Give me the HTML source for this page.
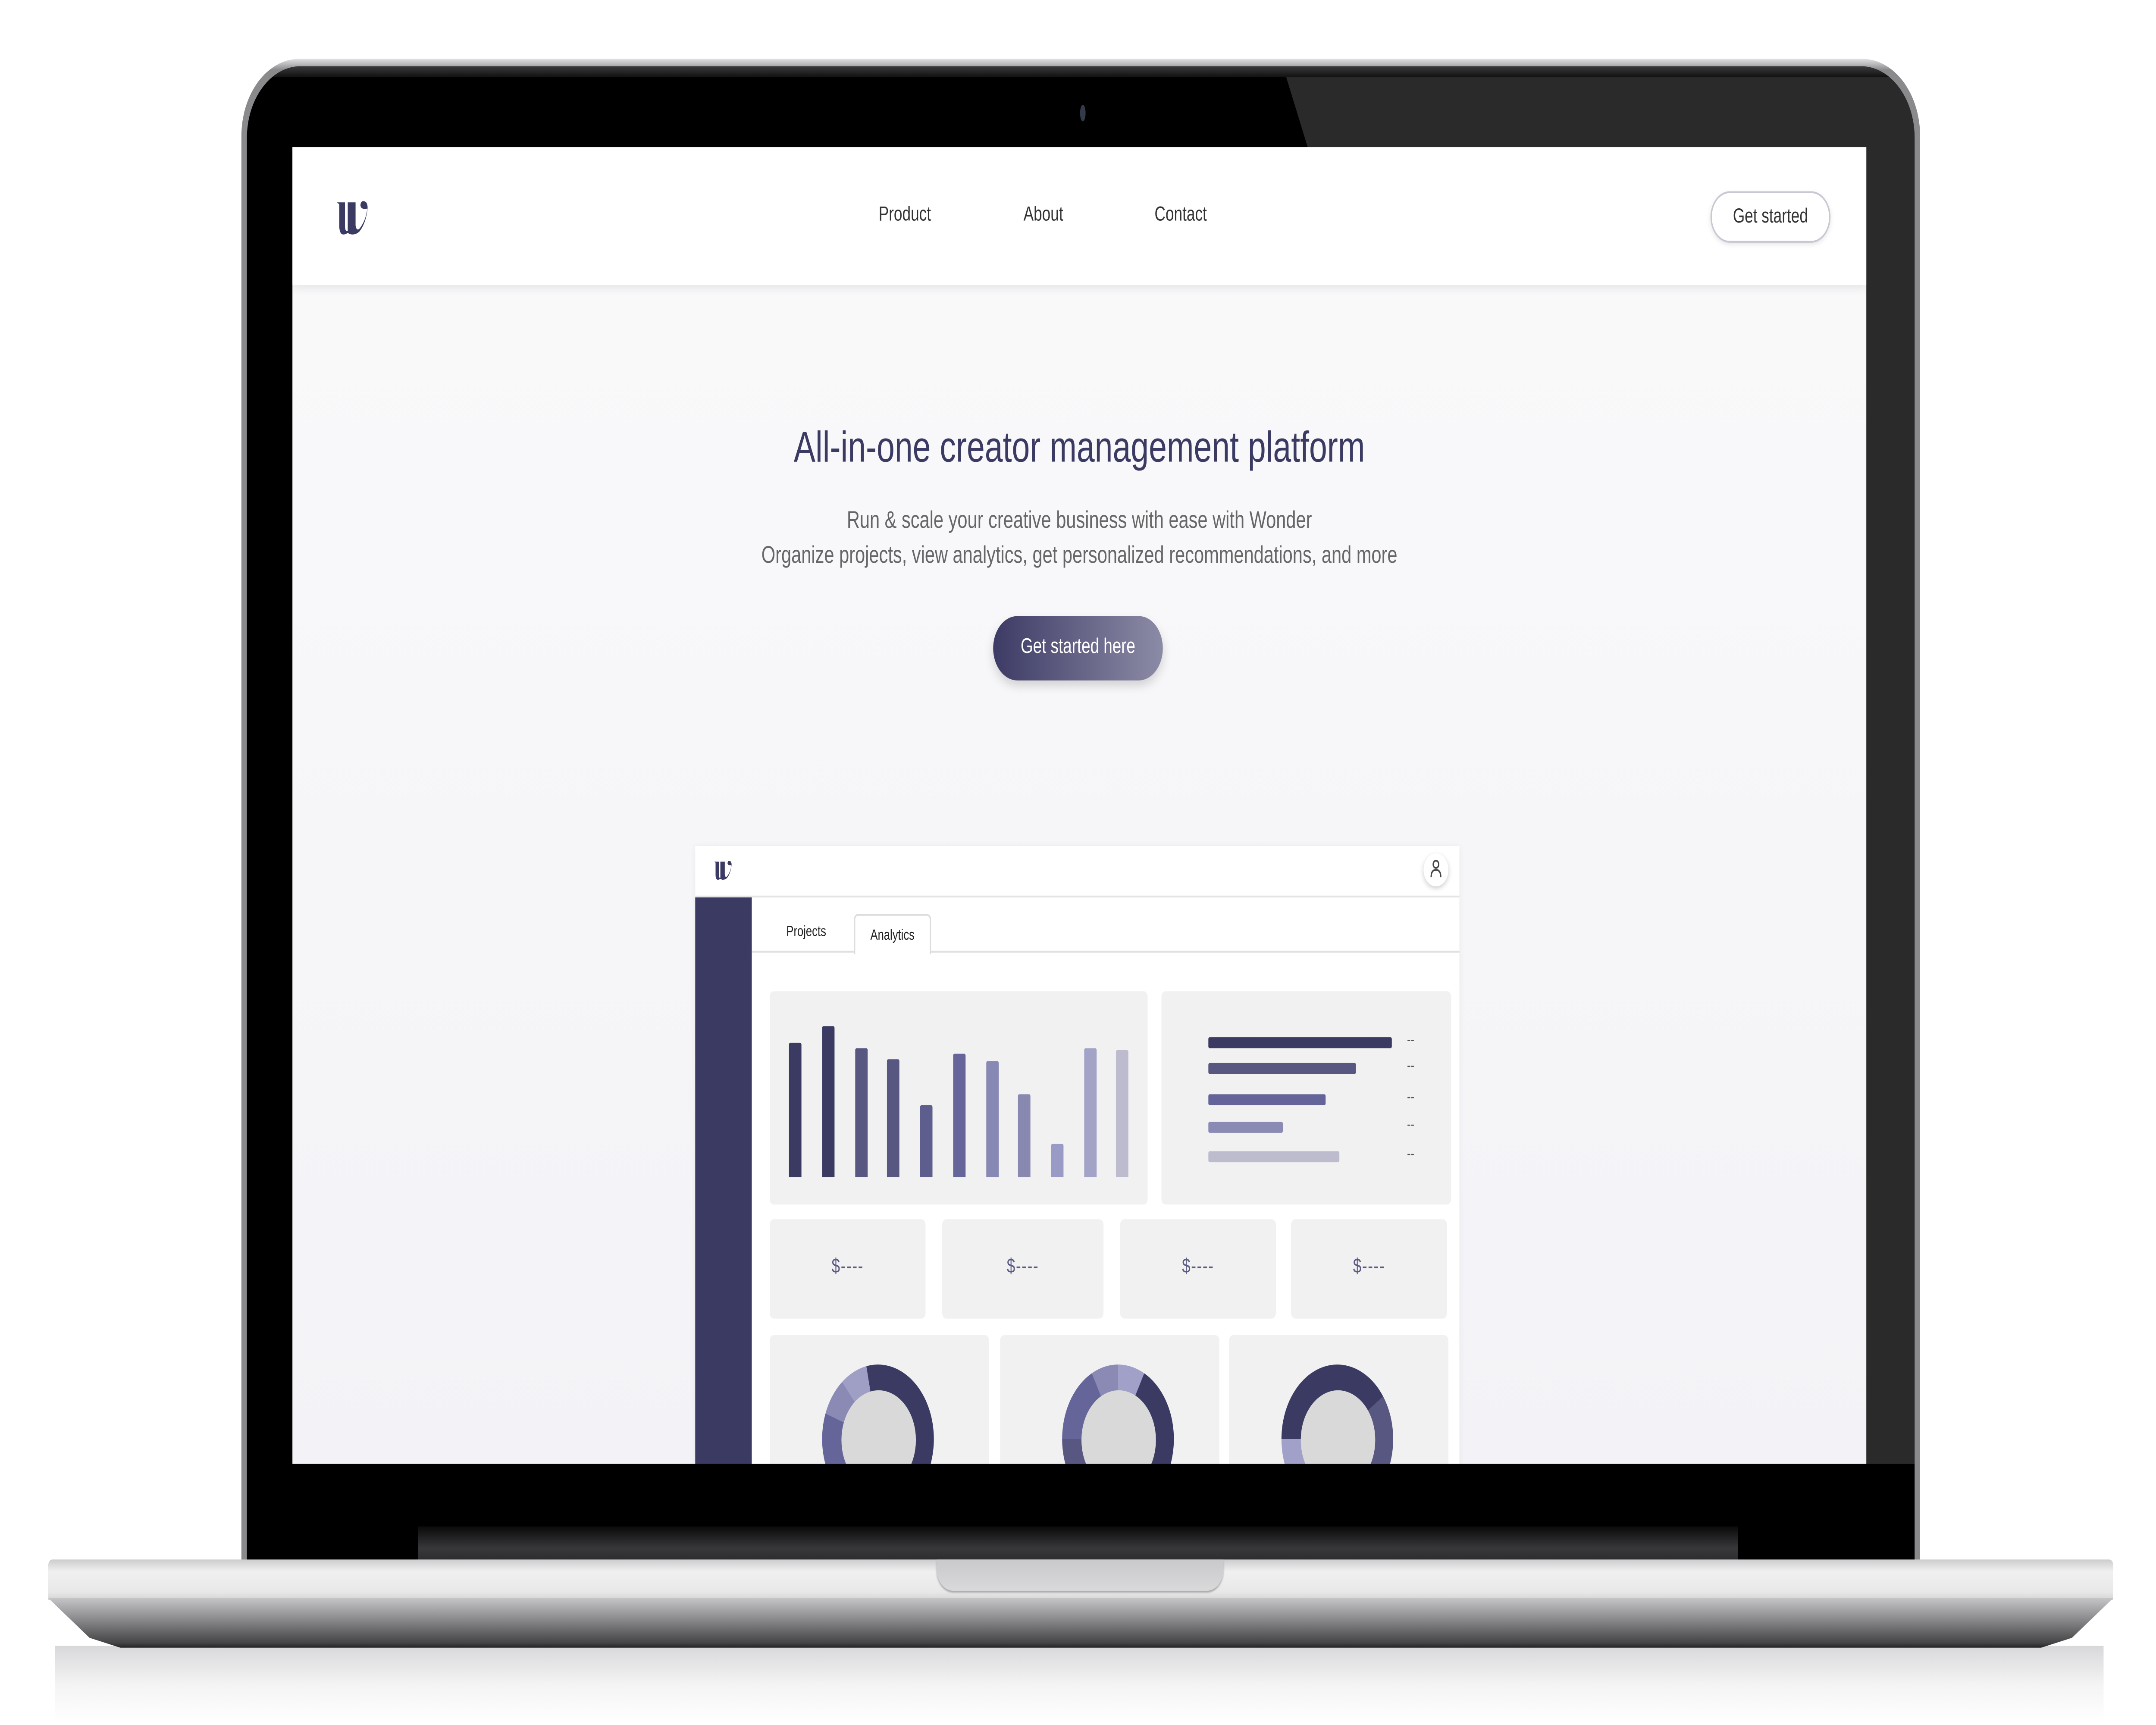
<!DOCTYPE html>
<html><head><meta charset="utf-8"><style>
html,body{margin:0;padding:0;background:#fff;width:100%;height:100%;overflow:hidden;}
body{position:relative;font-family:"Liberation Sans",sans-serif;}
#w{position:absolute;left:0;top:0;width:1563px;height:938px;transform-origin:0 0;transform:scale(4.2655);overflow:hidden;}
.a{position:absolute;}
.bar{position:absolute;bottom:0;width:9px;border-radius:1px 1px 0 0;}
.hb{position:absolute;left:34px;height:6px;border-radius:1px;}
.dd{position:absolute;left:178px;font-size:8px;color:#555;}
.card{position:absolute;background:#f1f1f1;border-radius:3px;}
.money{position:absolute;width:100%;top:20px;text-align:center;font-size:11px;color:#5a5a85;letter-spacing:0.5px;}
.donut{position:absolute;width:81px;height:81px;border-radius:50%;}
.donut i{position:absolute;left:13.5px;top:13.5px;width:54px;height:54px;border-radius:50%;background:#d9d9d9;}
</style></head><body><div id="w">
<div class="a" style="left:40px;top:895px;width:1485px;height:42px;background:linear-gradient(#d8d8da,#f4f4f5 50%,#fff);"></div>
<div class="a" style="left:175px;top:32px;width:1217px;height:830px;border-radius:42px 42px 0 0;background:linear-gradient(#e0e0e2,#b8b8bb 3px,#8a8a8d 6px);"></div>
<div class="a" style="left:179px;top:36px;width:1209px;height:826px;border-radius:39px 39px 0 0;background:#000;overflow:hidden;">
  <div class="a" style="left:0;top:0;width:1209px;height:826px;background:#2a2a2a;clip-path:polygon(751px 0,1209px 0,1209px 760px,1174px 760px,1174px 44px,769px 44px);"></div>
  <div class="a" style="left:0;top:0;width:1209px;height:6px;background:linear-gradient(#3a3a3c,#111);"></div>
</div>
<div class="a" style="left:783px;top:57px;width:4px;height:9px;border-radius:50%;background:#333a48;"></div>
<div class="a" style="left:303px;top:830px;width:957px;height:20px;background:linear-gradient(#0a0a0a,#38383b 60%,#2a2a2c);"></div>
<div class="a" style="left:35px;top:848px;width:1497px;height:22px;border-radius:3px 3px 0 0;background:linear-gradient(#ccccce,#f0f0f1 30%,#e8e8e9 80%,#d5d5d6);"></div>
<div class="a" style="left:35px;top:869px;width:1497px;height:27px;background:linear-gradient(#c5c5c7,#8e8e91 40%,#454548 90%,#222);clip-path:polygon(0 0,100% 0,98% 80%,96.5% 100%,3.5% 100%,2% 80%);"></div>
<div class="a" style="left:679px;top:848px;width:208px;height:17px;background:linear-gradient(#c9c9cb,#d9d9db);border-radius:0 0 12px 12px;box-shadow:0 1px 1px #aaa;"></div>
<div class="a" style="left:212px;top:80px;width:1141px;height:716px;overflow:hidden;background:linear-gradient(#fafafb,#f3f3f7);">
  <div class="a" style="left:0;top:0;width:1141px;height:75px;background:#fff;box-shadow:0 2px 5px rgba(0,0,0,0.08);"></div>
  <svg class="a" style="left:22px;top:18px" width="46" height="40" viewBox="0 0 300 240">
    <path d="M67 68 L105 68 L105 150 Q105 170 115 170 L118 170 L118 68 L155 68 L155 150 Q160 172 175 160 Q205 130 210 90 Q180 95 178 78 Q180 62 195 64 Q212 66 212 88 Q205 140 175 170 Q160 182 140 182 Q128 182 118 176 Q108 182 98 182 Q78 182 78 150 L78 75 Z" fill="#3a3a63"/>
  </svg>
  <div class="a" style="left:425px;top:31px;font-size:11px;color:#333;">Product</div>
  <div class="a" style="left:530px;top:31px;font-size:11px;color:#333;">About</div>
  <div class="a" style="left:625px;top:31px;font-size:11px;color:#333;">Contact</div>
  <div class="a" style="left:1028px;top:24px;width:85px;height:26px;border:1px solid #c8c8d4;border-radius:14px;background:#fff;box-shadow:0 1px 3px rgba(0,0,0,0.1);font-size:11px;color:#333;text-align:center;line-height:26px;">Get started</div>
  <div class="a" style="left:0;width:1141px;top:150px;text-align:center;font-size:23.5px;color:#3a3a63;">All-in-one creator management platform</div>
  <div class="a" style="left:0;width:1141px;top:193px;text-align:center;font-size:13px;line-height:19px;color:#666;">Run &amp; scale your creative business with ease with Wonder<br>Organize projects, view analytics, get personalized recommendations, and more</div>
  <div class="a" style="left:508px;top:255px;width:123px;height:35px;border-radius:18px;background:linear-gradient(90deg,#3d3b65,#8c8ba6);box-shadow:0 3px 6px rgba(0,0,0,0.15);color:#fff;font-size:11.5px;text-align:center;line-height:35px;">Get started here</div>
  <div class="a" style="left:292px;top:380px;width:554px;height:340px;background:#fff;box-shadow:0 0 4px rgba(0,0,0,0.06);">
    <div class="a" style="left:0;top:0;width:554px;height:27px;border-bottom:1px solid #e4e4e4;"></div>
    <svg class="a" style="left:8px;top:2px" width="26" height="22" viewBox="0 0 300 240">
      <path d="M67 68 L105 68 L105 150 Q105 170 115 170 L118 170 L118 68 L155 68 L155 150 Q160 172 175 160 Q205 130 210 90 Q180 95 178 78 Q180 62 195 64 Q212 66 212 88 Q205 140 175 170 Q160 182 140 182 Q128 182 118 176 Q108 182 98 182 Q78 182 78 150 L78 75 Z" fill="#3a3a63"/>
    </svg>
    <div class="a" style="left:528px;top:4px;width:18px;height:18px;border-radius:50%;background:#fff;box-shadow:0 1px 3px rgba(0,0,0,0.2);"></div>
    <svg class="a" style="left:532px;top:7px" width="10" height="11" viewBox="0 0 10 11"><circle cx="5" cy="3" r="2" fill="none" stroke="#444" stroke-width="0.9"/><path d="M1.5 10 Q1.5 6 5 6 Q8.5 6 8.5 10" fill="none" stroke="#444" stroke-width="0.9"/></svg>
    <div class="a" style="left:0;top:28px;width:41px;height:320px;background:#3b3a63;"></div>
    <div class="a" style="left:41px;top:57px;width:513px;height:1px;background:#e0e0e0;"></div>
    <div class="a" style="left:66px;top:42px;font-size:8px;color:#222;">Projects</div>
    <div class="a" style="left:115px;top:37px;width:54px;height:21px;border:1px solid #ddd;border-bottom:none;border-radius:3px 3px 0 0;background:#fff;font-size:8px;color:#222;text-align:center;line-height:22px;">Analytics</div>
    <div class="card" style="left:54px;top:79px;width:274px;height:116px;">
      <div class="a" style="left:0;top:0;width:274px;height:101px;">
        <div class="bar" style="left:14px;height:73px;background:#3b3a63"></div>
        <div class="bar" style="left:38px;height:82px;background:#3b3a63"></div>
        <div class="bar" style="left:62px;height:70px;background:#585782"></div>
        <div class="bar" style="left:85px;height:64px;background:#585782"></div>
        <div class="bar" style="left:109px;height:39px;background:#5e5e8e"></div>
        <div class="bar" style="left:133px;height:67px;background:#65659a"></div>
        <div class="bar" style="left:157px;height:63px;background:#8888b4"></div>
        <div class="bar" style="left:180px;height:45px;background:#8888b0"></div>
        <div class="bar" style="left:204px;height:18px;background:#9a9ac6"></div>
        <div class="bar" style="left:228px;height:70px;background:#a3a3c8"></div>
        <div class="bar" style="left:251px;height:69px;background:#bdbccf"></div>
      </div>
    </div>
    <div class="card" style="left:338px;top:79px;width:210px;height:116px;">
      <div class="hb" style="top:25px;width:133px;background:#3b3a63"></div>
      <div class="hb" style="top:39px;width:107px;background:#585782"></div>
      <div class="hb" style="top:56px;width:85px;background:#64649a"></div>
      <div class="hb" style="top:71px;width:54px;background:#8a8ab5"></div>
      <div class="hb" style="top:87px;width:95px;background:#bdbccf"></div>
      <div class="dd" style="top:22px">--</div><div class="dd" style="top:36px">--</div>
      <div class="dd" style="top:53px">--</div><div class="dd" style="top:68px">--</div>
      <div class="dd" style="top:84px">--</div>
    </div>
    <div class="card" style="left:54px;top:203px;width:113px;height:54px;"><div class="money">$----</div></div>
    <div class="card" style="left:179px;top:203px;width:117px;height:54px;"><div class="money">$----</div></div>
    <div class="card" style="left:308px;top:203px;width:113px;height:54px;"><div class="money">$----</div></div>
    <div class="card" style="left:432px;top:203px;width:113px;height:54px;"><div class="money">$----</div></div>
    <div class="card" style="left:54px;top:266px;width:159px;height:80px;overflow:hidden;">
      <div class="donut" style="left:38px;top:16px;background:conic-gradient(#3b3a63 0 210deg,#65659a 210deg 290deg,#8a8ab5 290deg 320deg,#9f9fc6 320deg 348deg,#3b3a63 348deg);"><i></i></div>
    </div>
    <div class="card" style="left:221px;top:266px;width:159px;height:80px;overflow:hidden;">
      <div class="donut" style="left:45px;top:16px;background:conic-gradient(#a0a0c8 0 28deg,#3b3a63 28deg 180deg,#585782 180deg 270deg,#65659a 270deg 332deg,#8a8ab5 332deg);"><i></i></div>
    </div>
    <div class="card" style="left:387px;top:266px;width:159px;height:80px;overflow:hidden;">
      <div class="donut" style="left:38px;top:16px;background:conic-gradient(#3b3a63 0 55deg,#585782 55deg 180deg,#a0a0c8 180deg 270deg,#3b3a63 270deg);"><i></i></div>
    </div>
  </div>
</div>
</div>
<script>
(function(){var w=document.getElementById('w');function f(){var sx=window.innerWidth/1563,sy=window.innerHeight/938;if(sx>0&&sy>0){w.style.transform='scale('+sx+','+sy+')';}}f();window.addEventListener('resize',f);})();
</script>
</body></html>
